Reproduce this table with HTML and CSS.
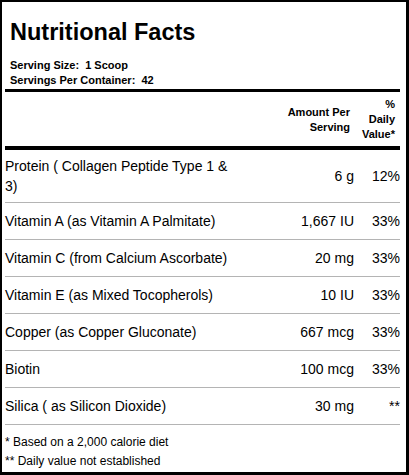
FILE: index.html
```html
<!DOCTYPE html>
<html lang="en">
<head>
    <meta charset="UTF-8">
    <title>Nutritional Facts</title>
    <link rel="stylesheet" href="styles.css">
</head>
<body>
    <div class="label">
        <div class="label-header">
            <h1>Nutritional Facts</h1>
            <p class="serving">Serving Size:&nbsp; 1 Scoop</p>
            <p class="serving">Servings Per Container:&nbsp; 42</p>
        </div>

        <div class="row head">
            <div class="name"></div>
            <div class="amt">Amount Per<br>Serving</div>
            <div class="dv">%<br>Daily<br>Value*</div>
        </div>

        <div class="row">
            <div class="name">Protein ( Collagen Peptide Type 1 &amp; 3)</div>
            <div class="amt">6 g</div>
            <div class="dv">12%</div>
        </div>
        <div class="row">
            <div class="name">Vitamin A (as Vitamin A Palmitate)</div>
            <div class="amt">1,667 IU</div>
            <div class="dv">33%</div>
        </div>
        <div class="row">
            <div class="name">Vitamin C (from Calcium Ascorbate)</div>
            <div class="amt">20 mg</div>
            <div class="dv">33%</div>
        </div>
        <div class="row">
            <div class="name">Vitamin E (as Mixed Tocopherols)</div>
            <div class="amt">10 IU</div>
            <div class="dv">33%</div>
        </div>
        <div class="row">
            <div class="name">Copper (as Copper Gluconate)</div>
            <div class="amt">667 mcg</div>
            <div class="dv">33%</div>
        </div>
        <div class="row">
            <div class="name">Biotin</div>
            <div class="amt">100 mcg</div>
            <div class="dv">33%</div>
        </div>
        <div class="row">
            <div class="name">Silica ( as Silicon Dioxide)</div>
            <div class="amt">30 mg</div>
            <div class="dv">**</div>
        </div>

        <div class="notes">
            <p>* Based on a 2,000 calorie diet</p>
            <p>** Daily value not established</p>
        </div>
    </div>
</body>
</html>
```

FILE: styles.css
```css
html, body {
    margin: 0;
    padding: 0;
    background-color: #fff;
}
body {
    font-family: "Liberation Sans", Arial, sans-serif;
    color: #000;
}
.label {
    box-sizing: border-box;
    width: 409px;
    height: 475px;
    border-style: solid;
    border-color: #000;
    border-width: 2px 3px 3px 2px;
    padding: 0 6px 0 3px;
}
.label-header {
    padding: 17px 0 1px 5px;
    border-bottom: 3px solid #000;
}
.label-header h1 {
    margin: 0 0 13px 0;
    font-size: 23.5px;
    line-height: 26px;
    font-weight: bold;
}
.serving {
    margin: 0;
    font-size: 11px;
    line-height: 15px;
    font-weight: bold;
}
.row {
    display: flex;
    align-items: center;
    min-height: 37px;
    padding: 6px 0;
    box-sizing: border-box;
    border-bottom: 1px solid #b4b4b4;
    font-size: 14px;
    line-height: 20px;
}
.row .name {
    flex: 1;
}
.row .amt {
    width: 120px;
    text-align: right;
    white-space: nowrap;
}
.row .dv {
    width: 46px;
    text-align: right;
    white-space: nowrap;
}
.row.head {
    padding: 5px 0 4px;
    border-bottom: 4px solid #000;
    font-size: 11px;
    line-height: 15px;
    font-weight: bold;
}
.row.head .amt {
    padding-right: 4px;
    box-sizing: border-box;
}
.row.head .dv {
    padding-right: 5px;
    box-sizing: border-box;
}
.notes {
    padding-top: 8px;
    font-size: 12px;
    line-height: 19px;
}
.notes p {
    margin: 0;
}
```
